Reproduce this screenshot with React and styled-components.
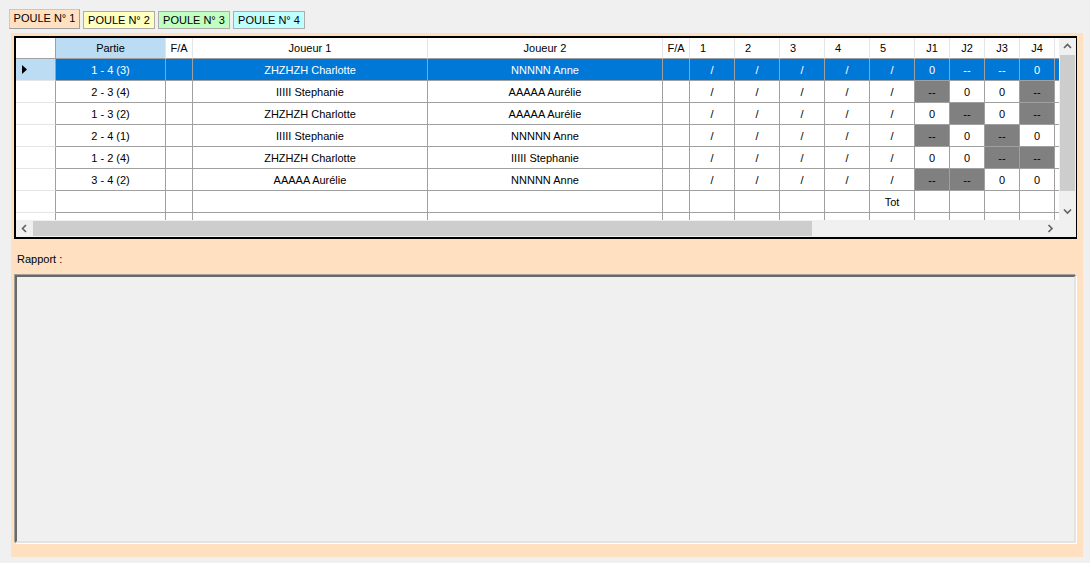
import React from "react";
import styled, { createGlobalStyle, css } from "styled-components";

const GlobalStyle = createGlobalStyle`
  html, body {
    margin: 0;
    padding: 0;
    background: #f0f0f0;
  }
  body {
    font-family: "Liberation Sans", Arial, sans-serif;
    font-size: 11px;
    color: #000;
  }
`;

const PEACH = "#ffe0c0";
const LINE = "#a0a0a0";

const Page = styled.div`
  width: 1090px;
  height: 563px;
  padding-top: 9px;
  box-sizing: border-box;
`;

const TabBar = styled.div`
  display: flex;
  align-items: flex-end;
  gap: 3px;
  height: 20px;
  padding-left: 9px;
  margin-bottom: 4px;
`;

const Tab = styled.div`
  box-sizing: border-box;
  width: 72px;
  height: ${(p) => (p.$active ? "20px" : "18px")};
  background: ${(p) => p.$bg};
  border: 1px solid #adadad;
  display: flex;
  align-items: center;
  justify-content: center;
  white-space: nowrap;
  ${(p) =>
    p.$active &&
    css`
      width: 71px;
      border-color: #c8c8c8 #a0a0a0 #a0a0a0 #c8c8c8;
      align-items: flex-start;
      padding-top: 2px;
    `}
`;

const Panel = styled.div`
  box-sizing: border-box;
  margin-left: 11px;
  width: 1072px;
  height: 524px;
  background: ${PEACH};
  padding: 3px 6px 13px 3px;
  display: flex;
  flex-direction: column;
`;

const GridFrame = styled.div`
  box-sizing: border-box;
  height: 203px;
  border: 2px solid #000;
  background: #fff;
  display: grid;
  grid-template-columns: 1043px 17px;
  grid-template-rows: 182px 17px;
`;

const Cells = styled.div`
  overflow: hidden;
  position: relative;
`;

const Row = styled.div`
  display: flex;
  width: max-content;
`;

const HeadCell = styled.div`
  box-sizing: border-box;
  flex: 0 0 ${(p) => p.$w}px;
  height: 21px;
  border-right: 1px solid #e5e5e5;
  border-bottom: 1px solid ${LINE};
  background: ${(p) => (p.$hl ? "#bcdcf4" : "#fff")};
  display: flex;
  align-items: center;
  justify-content: ${(p) => (p.$left ? "flex-start" : "center")};
  padding-left: ${(p) => (p.$left ? "10px" : "0")};
  white-space: nowrap;
`;

const RowHead = styled.div`
  box-sizing: border-box;
  flex: 0 0 40px;
  height: ${(p) => (p.$head ? "21px" : "22px")};
  border-right: 1px solid ${LINE};
  border-bottom: 1px solid ${(p) => (p.$head ? LINE : "#e5e5e5")};
  background: ${(p) => (p.$sel ? "#bcdcf4" : "#fff")};
  display: flex;
  align-items: center;
  padding-left: 6px;
`;

const Cell = styled.div`
  box-sizing: border-box;
  flex: 0 0 ${(p) => p.$w}px;
  height: 22px;
  border-right: 1px solid ${LINE};
  border-bottom: 1px solid ${LINE};
  background: ${(p) => (p.$sel ? "#0078d7" : p.$dark ? "#808080" : "#fff")};
  color: ${(p) => (p.$sel ? "#fff" : "#000")};
  display: flex;
  align-items: center;
  justify-content: center;
  white-space: nowrap;
  overflow: hidden;
`;

const VScroll = styled.div`
  background: #f0f0f0;
  display: flex;
  flex-direction: column;
`;

const HScroll = styled.div`
  background: #f0f0f0;
  display: flex;
`;

const Arrow = styled.div`
  flex: 0 0 17px;
  height: 17px;
  width: 17px;
  display: flex;
  align-items: center;
  justify-content: center;
`;

const VThumb = styled.div`
  margin: 0 1px;
  height: 136px;
  background: #cdcdcd;
`;

const Track = styled.div`
  flex: 1;
`;

const HThumb = styled.div`
  margin: 1px 0;
  width: 779px;
  background: #cdcdcd;
`;

const Corner = styled.div`
  background: #f0f0f0;
`;

const LabelRow = styled.div`
  height: 35px;
  box-sizing: border-box;
  padding: 14px 0 0 3px;
`;

const ReportBox = styled.div`
  flex: 1;
  box-sizing: border-box;
  background: #f0f0f0;
  border-style: solid;
  border-width: 2px;
  border-color: #696969 #e3e3e3 #e3e3e3 #696969;
  box-shadow: -1px -1px 0 #a0a0a0, 1px 1px 0 #fff;
  margin: 1px;
`;

const Chevron = ({ dir }) => {
  const paths = {
    up: "M1 5 L4.5 1.5 L8 5",
    down: "M1 1.5 L4.5 5 L8 1.5",
    left: "M5 1 L1.5 4.5 L5 8",
    right: "M1.5 1 L5 4.5 L1.5 8",
  };
  const horiz = dir === "left" || dir === "right";
  return (
    <svg width={horiz ? 7 : 9} height={horiz ? 9 : 7} viewBox={horiz ? "0 0 7 9" : "0 0 9 7"}>
      <path d={paths[dir]} fill="none" stroke="#606060" strokeWidth="1.6" />
    </svg>
  );
};

const columns = [
  { key: "part", w: 110, head: "Partie", hl: true },
  { key: "fa1", w: 27, head: "F/A" },
  { key: "j1", w: 235, head: "Joueur 1" },
  { key: "j2", w: 235, head: "Joueur 2" },
  { key: "fa2", w: 27, head: "F/A" },
  { key: "s1", w: 45, head: "1", left: true },
  { key: "s2", w: 45, head: "2", left: true },
  { key: "s3", w: 45, head: "3", left: true },
  { key: "s4", w: 45, head: "4", left: true },
  { key: "s5", w: 45, head: "5", left: true },
  { key: "p1", w: 35, head: "J1", player: true },
  { key: "p2", w: 35, head: "J2", player: true },
  { key: "p3", w: 35, head: "J3", player: true },
  { key: "p4", w: 35, head: "J4", player: true },
  { key: "pts", w: 60, head: "" },
];

const matches = [
  ["1 - 4 (3)", "ZHZHZH Charlotte", "NNNNN Anne", ["0", "--", "--", "0"]],
  ["2 - 3 (4)", "IIIII Stephanie", "AAAAA Aurélie", ["--", "0", "0", "--"]],
  ["1 - 3 (2)", "ZHZHZH Charlotte", "AAAAA Aurélie", ["0", "--", "0", "--"]],
  ["2 - 4 (1)", "IIIII Stephanie", "NNNNN Anne", ["--", "0", "--", "0"]],
  ["1 - 2 (4)", "ZHZHZH Charlotte", "IIIII Stephanie", ["0", "0", "--", "--"]],
  ["3 - 4 (2)", "AAAAA Aurélie", "NNNNN Anne", ["--", "--", "0", "0"]],
];

const rows = [
  ...matches.map(([part, j1, j2, pts]) => ({
    part,
    j1,
    j2,
    s1: "/",
    s2: "/",
    s3: "/",
    s4: "/",
    s5: "/",
    p1: pts[0],
    p2: pts[1],
    p3: pts[2],
    p4: pts[3],
  })),
  { s5: "Tot" },
  { s5: "Clt" },
];

const App = () => {
  const selected = 0;
  return (
    <Page>
      <GlobalStyle />
      <TabBar>
        <Tab $active $bg={PEACH}>POULE N° 1</Tab>
        <Tab $bg="#ffffc0">POULE N° 2</Tab>
        <Tab $bg="#c0ffc0">POULE N° 3</Tab>
        <Tab $bg="#c0ffff">POULE N° 4</Tab>
      </TabBar>
      <Panel>
        <GridFrame>
          <Cells>
            <Row>
              <RowHead $head />
              {columns.map((c) => (
                <HeadCell key={c.key} $w={c.w} $hl={c.hl} $left={c.left}>
                  {c.head}
                </HeadCell>
              ))}
            </Row>
            {rows.map((r, i) => (
              <Row key={i}>
                <RowHead $sel={i === selected}>
                  {i === selected && (
                    <svg width="5" height="9" viewBox="0 0 5 9">
                      <path d="M0 0 L5 4.5 L0 9 Z" fill="#000" />
                    </svg>
                  )}
                </RowHead>
                {columns.map((c) => (
                  <Cell
                    key={c.key}
                    $w={c.w}
                    $sel={i === selected}
                    $dark={c.player && r[c.key] === "--"}
                  >
                    {r[c.key] || ""}
                  </Cell>
                ))}
              </Row>
            ))}
          </Cells>
          <VScroll>
            <Arrow>
              <Chevron dir="up" />
            </Arrow>
            <VThumb />
            <Track />
            <Arrow>
              <Chevron dir="down" />
            </Arrow>
          </VScroll>
          <HScroll>
            <Arrow>
              <Chevron dir="left" />
            </Arrow>
            <HThumb />
            <Track />
            <Arrow>
              <Chevron dir="right" />
            </Arrow>
          </HScroll>
          <Corner />
        </GridFrame>
        <LabelRow>Rapport :</LabelRow>
        <ReportBox />
      </Panel>
    </Page>
  );
};

export default App;
